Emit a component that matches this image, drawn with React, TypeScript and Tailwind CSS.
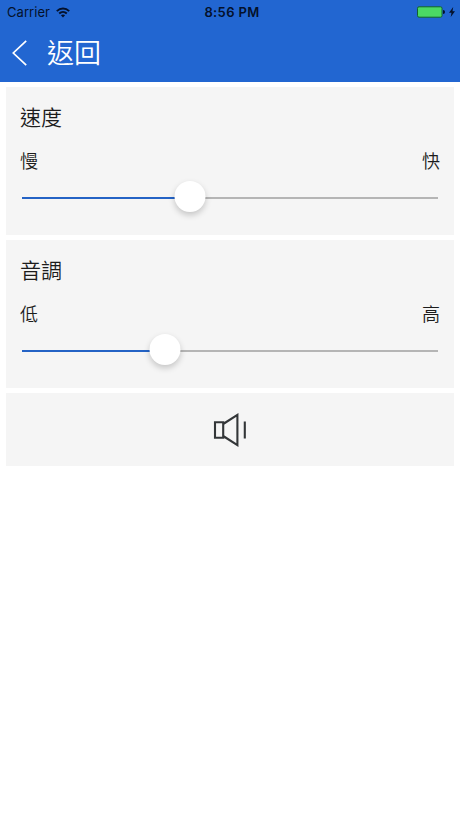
type SliderCardProps = {
  title: string;
  low: string;
  high: string;
  value: number;
};

function StatusBar() {
  return (
    <div className="grid h-6 grid-cols-3 items-center pl-[7px] pr-[5px] text-[13px] leading-6 text-[#04112b]">
      <div className="flex items-center gap-[6px]">
        <span className="tracking-[0.05px]">Carrier</span>
        <svg width="14" height="11" viewBox="0 0 14 11" fill="none" stroke="currentColor" strokeWidth="1.9">
          <path d="M0.8 4.1C4.4 0.6 9.6 0.6 13.2 4.1" />
          <path d="M3.2 6.5C5.4 4.4 8.6 4.4 10.8 6.5" />
          <path d="M7 10.4L4.9 8.2C6.1 7.1 7.9 7.1 9.1 8.2Z" fill="currentColor" stroke="none" />
        </svg>
      </div>
      <span className="whitespace-nowrap pl-[2px] text-center font-semibold tracking-[0.35px]">8:56 PM</span>
      <div className="flex items-center justify-end gap-1">
        <svg width="28" height="12" viewBox="0 0 28 12">
          <rect x="0.5" y="0.8" width="24.5" height="10.4" rx="1.5" fill="#4bd964" stroke="#12602f" />
          <path d="M26 4a2 2 0 0 1 0 4Z" fill="#04112b" />
        </svg>
        <svg width="6" height="10" viewBox="0 0 6 10">
          <path d="M4.2 0L0 5.7h2.5L1.7 10 6 4.2H3.5Z" fill="#04112b" />
        </svg>
      </div>
    </div>
  );
}

function SliderCard({ title, low, high, value }: SliderCardProps) {
  return (
    <section className="h-[148px] bg-[#f5f5f5] px-[14px] pt-4 text-[#1c1c1c]">
      <h2 className="text-[21px] font-[350] leading-[30px]">{title}</h2>
      <div className="mt-4 flex justify-between text-[18px] font-[350] leading-[26px]">
        <span>{low}</span>
        <span>{high}</span>
      </div>
      <div className="relative mx-[2px] mt-[6px] flex h-[34px] items-center">
        <div className="h-[2px] w-full bg-[#b5b5b5]">
          <div className="h-full bg-[#2463c5]" style={{ width: `${value}%` }} />
        </div>
        <div
          className="absolute top-0 size-[31px] -translate-x-1/2 rounded-full bg-white shadow-[0_3px_6px_rgba(0,0,0,0.2)]"
          style={{ left: `${value}%` }}
        />
      </div>
    </section>
  );
}

export default function App() {
  return (
    <div className="h-[818px] w-full overflow-hidden bg-white font-[Inter,'Noto_Sans_CJK_TC',sans-serif]">
      <header className="h-[82px] bg-[#2266d1]">
        <StatusBar />
        <div className="flex h-[58px] items-center pl-3 text-white">
          <svg width="15" height="26" viewBox="0 0 15 26" fill="none" stroke="currentColor" strokeWidth="1.7">
            <path d="M14.2 0.8L1.3 13L14.2 25.2" />
          </svg>
          <h1 className="ml-5 pt-[2px] text-[27px] font-[350] leading-[40px]">返回</h1>
        </div>
      </header>
      <main className="flex flex-col gap-[5px] px-[6px] pt-[5px]">
        <SliderCard title="速度" low="慢" high="快" value={40.5} />
        <SliderCard title="音調" low="低" high="高" value={34.4} />
        <button className="flex h-[73px] items-center justify-center bg-[#f5f5f5]">
          <svg width="34" height="34" viewBox="0 0 34 34" fill="none" stroke="#333638" strokeWidth="2.1">
            <path d="M2 9.2H10.2V24.8H2ZM10.2 11L24.4 1.9V32.1L10.2 23M31.8 8.5V25.5" />
          </svg>
        </button>
      </main>
    </div>
  );
}
